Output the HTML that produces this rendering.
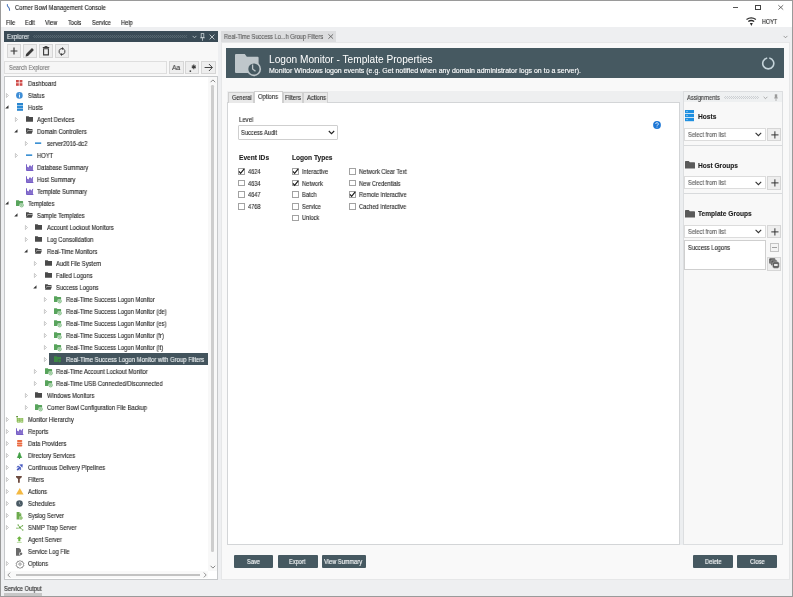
<!DOCTYPE html>
<html><head><meta charset="utf-8">
<style>
*{box-sizing:border-box;margin:0;padding:0}
html,body{width:793px;height:597px;overflow:hidden;background:#fff}
body{position:relative;font-family:"Liberation Sans",sans-serif;color:#222;font-size:6px}
.a{position:absolute}
svg.a{overflow:visible}
.t{position:absolute;white-space:pre;line-height:1;will-change:transform;-webkit-text-stroke:0.12px currentColor}
.btn{position:absolute;background:#eeeeee;border:1px solid #d6d6d6}
.dbtn{position:absolute;background:#465961;border-radius:1px}
.cb{position:absolute;width:7px;height:7px;border:1px solid #a2a2a2;background:#fff}
</style></head><body>
<div class="a" style="left:0;top:26.5px;width:793px;height:571px;background:#eeeff1"></div>
<svg class="a" style="left:6px;top:4px" width="5" height="7.5" viewBox="0 0 5 7.5" ><path d="M1.4 0.1C1 1.5 1.2 2.5 2.5 3.2C3.5 3.8 3.6 4.8 3.6 6.8" stroke="#4470b8" stroke-width="1.05" fill="none"/></svg>
<div class="t" style="left:14.8px;top:5px;font-size:6.6px;color:#1c1c1c;transform:scaleX(0.885);transform-origin:0 0;">Corner Bowl Management Console</div>
<div class="a" style="left:732.8px;top:7px;width:5.4px;height:0.6px;background:#555"></div>
<div class="a" style="left:755px;top:5.2px;width:6px;height:4.6px;border:0.7px solid #444"></div>
<svg class="a" style="left:778.2px;top:5px" width="5.5" height="4.8" viewBox="0 0 5.5 4.8" ><path d="M0.3 0.2l4.9 4.4M5.2 0.2l-4.9 4.4" stroke="#444" stroke-width="0.75"/></svg>
<div class="t" style="left:5.9px;top:20px;font-size:6.6px;color:#1c1c1c;transform:scaleX(0.86);transform-origin:0 0;">File</div>
<div class="t" style="left:24.7px;top:20px;font-size:6.6px;color:#1c1c1c;transform:scaleX(0.86);transform-origin:0 0;">Edit</div>
<div class="t" style="left:45px;top:20px;font-size:6.6px;color:#1c1c1c;transform:scaleX(0.86);transform-origin:0 0;">View</div>
<div class="t" style="left:68.2px;top:20px;font-size:6.6px;color:#1c1c1c;transform:scaleX(0.86);transform-origin:0 0;">Tools</div>
<div class="t" style="left:92px;top:20px;font-size:6.6px;color:#1c1c1c;transform:scaleX(0.86);transform-origin:0 0;">Service</div>
<div class="t" style="left:121px;top:20px;font-size:6.6px;color:#1c1c1c;transform:scaleX(0.86);transform-origin:0 0;">Help</div>
<svg class="a" style="left:746px;top:17px" width="10.4" height="9.5" viewBox="0 0 10.4 9.5" ><path d="M0.5 2.5Q5.2 -0.7 9.9 2.5M2.3 4.5Q5.2 2.5 8.2 4.5" stroke="#2a2a2a" stroke-width="1.3" fill="none"/><path d="M3.9 6.1h2.9l-1.45 2.8z" fill="#2a2a2a"/></svg>
<div class="t" style="left:761.9px;top:19px;font-size:6.6px;color:#1c1c1c;transform:scaleX(0.83);transform-origin:0 0;">HOYT</div>
<div class="a" style="left:4px;top:31px;width:213.5px;height:10.7px;background:#3a4b56"></div>
<div class="t" style="left:7px;top:34px;font-size:6.6px;color:#e4eaed;transform:scaleX(0.9);transform-origin:0 0;">Explorer</div>
<div class="a" style="left:32.8px;top:34.8px;width:154px;height:3.4px;background:repeating-conic-gradient(#56666f 0 25%,#3a4b56 0 50%) 0 0/2px 2px"></div>
<svg class="a" style="left:191.5px;top:35px" width="5" height="4" viewBox="0 0 5 4" ><path d="M0.6 0.9l1.9 1.9 1.9-1.9" stroke="#c8d0d4" stroke-width="0.8" fill="none"/></svg>
<svg class="a" style="left:200px;top:32.6px" width="5" height="8" viewBox="0 0 5 8" ><rect x="1.2" y="0.6" width="2.6" height="4" fill="none" stroke="#c8d0d4" stroke-width="0.8"/><path d="M0.2 4.8h4.6M2.5 4.8v3" stroke="#c8d0d4" stroke-width="0.8"/></svg>
<svg class="a" style="left:208.5px;top:33.5px" width="6" height="6" viewBox="0 0 6 6" ><path d="M0.6 0.6l4.8 4.8M5.4 0.6l-4.8 4.8" stroke="#c8d0d4" stroke-width="0.9"/></svg>
<div class="a" style="left:4px;top:41.7px;width:213.5px;height:35px;background:#f8f8f8"></div>
<div class="btn" style="left:7.1px;top:44.2px;width:13.7px;height:13.5px"></div>
<div class="btn" style="left:23.2px;top:44.2px;width:13.7px;height:13.5px"></div>
<div class="btn" style="left:39.2px;top:44.2px;width:13.7px;height:13.5px"></div>
<div class="btn" style="left:55.2px;top:44.2px;width:13.7px;height:13.5px"></div>
<svg class="a" style="left:10px;top:47px" width="8" height="8" viewBox="0 0 8 8" ><path d="M4 0.6v6.8M0.6 4h6.8" stroke="#3a3a3a" stroke-width="1.2"/></svg>
<svg class="a" style="left:25.3px;top:46.8px" width="10" height="10" viewBox="0 0 10 10" ><path d="M0.6 9.4l0.5-2.4 5.9-5.9 1.9 1.9-5.9 5.9z" fill="#3a3a3a"/></svg>
<svg class="a" style="left:42.3px;top:46.3px" width="8" height="10" viewBox="0 0 8 10" ><path d="M0.8 1.5h6.4M2.6 0.6h2.8" stroke="#3a3a3a" stroke-width="1"/><path d="M1.6 2.7h4.8v6.2h-4.8z" fill="none" stroke="#3a3a3a" stroke-width="1.1"/></svg>
<svg class="a" style="left:58px;top:46.5px" width="8" height="9" viewBox="0 0 8 9" ><path d="M4.4 1.5A3 3 0 0 0 2.3 6.9M3.6 7.5A3 3 0 0 0 5.7 2.1" stroke="#3a3a3a" stroke-width="1" fill="none"/><path d="M4 0.1l2 1.4-2 1.4zM4 6.1l-2 1.4 2 1.4z" fill="#3a3a3a"/></svg>
<div class="a" style="left:4px;top:60.5px;width:162.5px;height:13px;background:#f6f6f6;border:1px solid #dedede"></div>
<div class="t" style="left:8.8px;top:65px;font-size:6.6px;color:#777;transform:scaleX(0.86);transform-origin:0 0;">Search Explorer</div>
<div class="btn" style="left:169.4px;top:60.5px;width:14.2px;height:13px"></div>
<div class="btn" style="left:185.3px;top:60.5px;width:14.2px;height:13px"></div>
<div class="btn" style="left:201.4px;top:60.5px;width:14.2px;height:13px"></div>
<div class="t" style="left:171.5px;top:64px;font-size:7.6px;color:#3a3a3a;transform:scaleX(0.88);transform-origin:0 0;">Aa</div>
<svg class="a" style="left:188.3px;top:63.6px" width="10" height="9" viewBox="0 0 10 9" ><path d="M5.8 0.6v4.6M3.8 1.8l4 2.3M3.8 4.1l4-2.3" stroke="#3a3a3a" stroke-width="1.1"/><rect x="1.6" y="6.4" width="1.5" height="1.5" fill="#3a3a3a"/></svg>
<svg class="a" style="left:203.8px;top:62.8px" width="10" height="9" viewBox="0 0 10 9" ><path d="M0.6 4.5h7.6M4.9 1l3.5 3.5-3.5 3.5" stroke="#444" stroke-width="1" fill="none"/></svg>
<div class="a" style="left:4px;top:75.8px;width:213.5px;height:504.2px;background:#fff;border:1px solid #c6c8ca"></div>
<svg class="a" style="left:16.3px;top:80.3px" width="7" height="6" viewBox="0 0 7 6" ><rect x="0" y="0" width="2.8" height="2.5" fill="#cf4a48"/><rect x="3.6" y="0" width="2.8" height="2.5" fill="#cf4a48"/><rect x="0" y="3.2" width="2.8" height="2.6" fill="#cf4a48"/><rect x="3.6" y="3.2" width="2.8" height="2.6" fill="#cf4a48"/></svg>
<div class="t" style="left:27.7px;top:81px;font-size:6.6px;color:#262626;transform:scaleX(0.88);transform-origin:0 0;">Dashboard</div>
<svg class="a" style="left:5.7px;top:92.8px" width="3" height="5" viewBox="0 0 3 5" ><path d="M0.4 0.5l2.1 2-2.1 2z" stroke="#a6a6a6" stroke-width="0.6" fill="none"/></svg>
<svg class="a" style="left:16.3px;top:92.3px" width="7" height="7" viewBox="0 0 7 7" ><circle cx="3.4" cy="3.4" r="3.3" fill="#3f8ed6"/><rect x="3" y="3" width="0.9" height="2.5" fill="#fff"/><rect x="3" y="1.5" width="0.9" height="0.9" fill="#fff"/></svg>
<div class="t" style="left:27.7px;top:93px;font-size:6.6px;color:#262626;transform:scaleX(0.88);transform-origin:0 0;">Status</div>
<svg class="a" style="left:4.6px;top:105.3px" width="4" height="4" viewBox="0 0 4 4" ><path d="M3.5 0.3v3.3h-3.3z" fill="#333"/></svg>
<svg class="a" style="left:17.0px;top:103.1px" width="6" height="8" viewBox="0 0 6 8" ><rect x="0" y="0" width="6" height="2.3" fill="#2a86cf"/><rect x="0" y="2.75" width="6" height="2.3" fill="#2a8ad6"/><rect x="0" y="5.5" width="6" height="2.3" fill="#2a86cf"/></svg>
<div class="t" style="left:27.7px;top:105px;font-size:6.6px;color:#262626;transform:scaleX(0.88);transform-origin:0 0;">Hosts</div>
<svg class="a" style="left:15.2px;top:116.8px" width="3" height="5" viewBox="0 0 3 5" ><path d="M0.4 0.5l2.1 2-2.1 2z" stroke="#a6a6a6" stroke-width="0.6" fill="none"/></svg>
<svg class="a" style="left:25.8px;top:116.3px" width="7" height="6" viewBox="0 0 7 6" ><path d="M0 0.3h2.6l0.8 0.8h3.6v4.7h-7z" fill="#4a4a4a"/></svg>
<div class="t" style="left:37.2px;top:117px;font-size:6.6px;color:#262626;transform:scaleX(0.88);transform-origin:0 0;">Agent Devices</div>
<svg class="a" style="left:14.1px;top:129.3px" width="4" height="4" viewBox="0 0 4 4" ><path d="M3.5 0.3v3.3h-3.3z" fill="#333"/></svg>
<svg class="a" style="left:25.8px;top:128.3px" width="7" height="6" viewBox="0 0 7 6" ><path d="M0 0.3h2.6l0.8 0.8h3.1v1h-4.6l-1.9 3.7z" fill="#4a4a4a"/><path d="M1.9 2.5h5.1l-1.3 3.3h-5.7z" fill="#4a4a4a"/></svg>
<div class="t" style="left:37.2px;top:129px;font-size:6.6px;color:#262626;transform:scaleX(0.88);transform-origin:0 0;">Domain Controllers</div>
<svg class="a" style="left:24.7px;top:140.8px" width="3" height="5" viewBox="0 0 3 5" ><path d="M0.4 0.5l2.1 2-2.1 2z" stroke="#a6a6a6" stroke-width="0.6" fill="none"/></svg>
<svg class="a" style="left:35.3px;top:142.1px" width="7" height="3" viewBox="0 0 7 3" ><rect x="0" y="0.4" width="6.2" height="1.5" fill="#2a86cf"/></svg>
<div class="t" style="left:46.7px;top:141px;font-size:6.6px;color:#262626;transform:scaleX(0.88);transform-origin:0 0;">server2016-dc2</div>
<svg class="a" style="left:15.2px;top:152.8px" width="3" height="5" viewBox="0 0 3 5" ><path d="M0.4 0.5l2.1 2-2.1 2z" stroke="#a6a6a6" stroke-width="0.6" fill="none"/></svg>
<svg class="a" style="left:25.8px;top:154.1px" width="7" height="3" viewBox="0 0 7 3" ><rect x="0" y="0.4" width="6.2" height="1.5" fill="#2a86cf"/></svg>
<div class="t" style="left:37.2px;top:153px;font-size:6.6px;color:#262626;transform:scaleX(0.88);transform-origin:0 0;">HOYT</div>
<svg class="a" style="left:25.8px;top:164.3px" width="8" height="7" viewBox="0 0 8 7" ><path d="M0.9 6.2L0.9 2.8L2.4 4.2L4 1.6L5.4 3.4L7 0.9V6.2z" fill="#6a4fc1" opacity="0.8"/><path d="M0.5 0.3v6.2h6.9" stroke="#6a4fc1" stroke-width="0.9" fill="none"/><path d="M0.9 2.8l1.5 1.4 1.6-2.6 1.4 1.8 1.6-2.5" stroke="#6a4fc1" stroke-width="0.8" fill="none"/></svg>
<div class="t" style="left:37.2px;top:165px;font-size:6.6px;color:#262626;transform:scaleX(0.88);transform-origin:0 0;">Database Summary</div>
<svg class="a" style="left:25.8px;top:176.3px" width="8" height="7" viewBox="0 0 8 7" ><path d="M0.9 6.2L0.9 2.8L2.4 4.2L4 1.6L5.4 3.4L7 0.9V6.2z" fill="#6a4fc1" opacity="0.8"/><path d="M0.5 0.3v6.2h6.9" stroke="#6a4fc1" stroke-width="0.9" fill="none"/><path d="M0.9 2.8l1.5 1.4 1.6-2.6 1.4 1.8 1.6-2.5" stroke="#6a4fc1" stroke-width="0.8" fill="none"/></svg>
<div class="t" style="left:37.2px;top:177px;font-size:6.6px;color:#262626;transform:scaleX(0.88);transform-origin:0 0;">Host Summary</div>
<svg class="a" style="left:25.8px;top:188.3px" width="8" height="7" viewBox="0 0 8 7" ><path d="M0.9 6.2L0.9 2.8L2.4 4.2L4 1.6L5.4 3.4L7 0.9V6.2z" fill="#6a4fc1" opacity="0.8"/><path d="M0.5 0.3v6.2h6.9" stroke="#6a4fc1" stroke-width="0.9" fill="none"/><path d="M0.9 2.8l1.5 1.4 1.6-2.6 1.4 1.8 1.6-2.5" stroke="#6a4fc1" stroke-width="0.8" fill="none"/></svg>
<div class="t" style="left:37.2px;top:189px;font-size:6.6px;color:#262626;transform:scaleX(0.88);transform-origin:0 0;">Template Summary</div>
<svg class="a" style="left:4.6px;top:201.3px" width="4" height="4" viewBox="0 0 4 4" ><path d="M3.5 0.3v3.3h-3.3z" fill="#333"/></svg>
<svg class="a" style="left:16.3px;top:200.3px" width="8" height="8" viewBox="0 0 8 8" ><path d="M0 0.6a0.4 0.4 0 0 1 0.4-0.4h2.3l0.8 0.8h3.2a0.4 0.4 0 0 1 0.4 0.4v4.6h-7.1z" fill="#58a45c"/><circle cx="5.6" cy="5.2" r="2.3" fill="#fff"/><circle cx="5.6" cy="5.2" r="1.8" fill="#cfe8d0" stroke="#58a45c" stroke-width="0.6"/><path d="M5.4 4.2v1.2h1" stroke="#58a45c" stroke-width="0.55" fill="none"/></svg>
<div class="t" style="left:27.7px;top:201px;font-size:6.6px;color:#262626;transform:scaleX(0.88);transform-origin:0 0;">Templates</div>
<svg class="a" style="left:14.1px;top:213.3px" width="4" height="4" viewBox="0 0 4 4" ><path d="M3.5 0.3v3.3h-3.3z" fill="#333"/></svg>
<svg class="a" style="left:25.8px;top:212.3px" width="7" height="6" viewBox="0 0 7 6" ><path d="M0 0.3h2.6l0.8 0.8h3.1v1h-4.6l-1.9 3.7z" fill="#4a4a4a"/><path d="M1.9 2.5h5.1l-1.3 3.3h-5.7z" fill="#4a4a4a"/></svg>
<div class="t" style="left:37.2px;top:213px;font-size:6.6px;color:#262626;transform:scaleX(0.88);transform-origin:0 0;">Sample Templates</div>
<svg class="a" style="left:24.7px;top:224.8px" width="3" height="5" viewBox="0 0 3 5" ><path d="M0.4 0.5l2.1 2-2.1 2z" stroke="#a6a6a6" stroke-width="0.6" fill="none"/></svg>
<svg class="a" style="left:35.3px;top:224.3px" width="7" height="6" viewBox="0 0 7 6" ><path d="M0 0.3h2.6l0.8 0.8h3.6v4.7h-7z" fill="#4a4a4a"/></svg>
<div class="t" style="left:46.7px;top:225px;font-size:6.6px;color:#262626;transform:scaleX(0.88);transform-origin:0 0;">Account Lockout Monitors</div>
<svg class="a" style="left:24.7px;top:236.8px" width="3" height="5" viewBox="0 0 3 5" ><path d="M0.4 0.5l2.1 2-2.1 2z" stroke="#a6a6a6" stroke-width="0.6" fill="none"/></svg>
<svg class="a" style="left:35.3px;top:236.3px" width="7" height="6" viewBox="0 0 7 6" ><path d="M0 0.3h2.6l0.8 0.8h3.6v4.7h-7z" fill="#4a4a4a"/></svg>
<div class="t" style="left:46.7px;top:237px;font-size:6.6px;color:#262626;transform:scaleX(0.88);transform-origin:0 0;">Log Consolidation</div>
<svg class="a" style="left:23.6px;top:249.3px" width="4" height="4" viewBox="0 0 4 4" ><path d="M3.5 0.3v3.3h-3.3z" fill="#333"/></svg>
<svg class="a" style="left:35.3px;top:248.3px" width="7" height="6" viewBox="0 0 7 6" ><path d="M0 0.3h2.6l0.8 0.8h3.1v1h-4.6l-1.9 3.7z" fill="#4a4a4a"/><path d="M1.9 2.5h5.1l-1.3 3.3h-5.7z" fill="#4a4a4a"/></svg>
<div class="t" style="left:46.7px;top:249px;font-size:6.6px;color:#262626;transform:scaleX(0.88);transform-origin:0 0;">Real-Time Monitors</div>
<svg class="a" style="left:34.2px;top:260.8px" width="3" height="5" viewBox="0 0 3 5" ><path d="M0.4 0.5l2.1 2-2.1 2z" stroke="#a6a6a6" stroke-width="0.6" fill="none"/></svg>
<svg class="a" style="left:44.8px;top:260.3px" width="7" height="6" viewBox="0 0 7 6" ><path d="M0 0.3h2.6l0.8 0.8h3.6v4.7h-7z" fill="#4a4a4a"/></svg>
<div class="t" style="left:56.2px;top:261px;font-size:6.6px;color:#262626;transform:scaleX(0.88);transform-origin:0 0;">Audit File System</div>
<svg class="a" style="left:34.2px;top:272.8px" width="3" height="5" viewBox="0 0 3 5" ><path d="M0.4 0.5l2.1 2-2.1 2z" stroke="#a6a6a6" stroke-width="0.6" fill="none"/></svg>
<svg class="a" style="left:44.8px;top:272.3px" width="7" height="6" viewBox="0 0 7 6" ><path d="M0 0.3h2.6l0.8 0.8h3.6v4.7h-7z" fill="#4a4a4a"/></svg>
<div class="t" style="left:56.2px;top:273px;font-size:6.6px;color:#262626;transform:scaleX(0.88);transform-origin:0 0;">Failed Logons</div>
<svg class="a" style="left:33.1px;top:285.3px" width="4" height="4" viewBox="0 0 4 4" ><path d="M3.5 0.3v3.3h-3.3z" fill="#333"/></svg>
<svg class="a" style="left:44.8px;top:284.3px" width="7" height="6" viewBox="0 0 7 6" ><path d="M0 0.3h2.6l0.8 0.8h3.1v1h-4.6l-1.9 3.7z" fill="#4a4a4a"/><path d="M1.9 2.5h5.1l-1.3 3.3h-5.7z" fill="#4a4a4a"/></svg>
<div class="t" style="left:56.2px;top:285px;font-size:6.6px;color:#262626;transform:scaleX(0.88);transform-origin:0 0;">Success Logons</div>
<svg class="a" style="left:43.7px;top:296.8px" width="3" height="5" viewBox="0 0 3 5" ><path d="M0.4 0.5l2.1 2-2.1 2z" stroke="#a6a6a6" stroke-width="0.6" fill="none"/></svg>
<svg class="a" style="left:54.3px;top:296.3px" width="8" height="8" viewBox="0 0 8 8" ><path d="M0 0.6a0.4 0.4 0 0 1 0.4-0.4h2.3l0.8 0.8h3.2a0.4 0.4 0 0 1 0.4 0.4v4.6h-7.1z" fill="#58a45c"/><circle cx="5.6" cy="5.2" r="2.3" fill="#fff"/><circle cx="5.6" cy="5.2" r="1.8" fill="#cfe8d0" stroke="#58a45c" stroke-width="0.6"/><path d="M5.4 4.2v1.2h1" stroke="#58a45c" stroke-width="0.55" fill="none"/></svg>
<div class="t" style="left:65.7px;top:297px;font-size:6.6px;color:#262626;transform:scaleX(0.88);transform-origin:0 0;">Real-Time Success Logon Monitor</div>
<svg class="a" style="left:43.7px;top:308.8px" width="3" height="5" viewBox="0 0 3 5" ><path d="M0.4 0.5l2.1 2-2.1 2z" stroke="#a6a6a6" stroke-width="0.6" fill="none"/></svg>
<svg class="a" style="left:54.3px;top:308.3px" width="8" height="8" viewBox="0 0 8 8" ><path d="M0 0.6a0.4 0.4 0 0 1 0.4-0.4h2.3l0.8 0.8h3.2a0.4 0.4 0 0 1 0.4 0.4v4.6h-7.1z" fill="#58a45c"/><circle cx="5.6" cy="5.2" r="2.3" fill="#fff"/><circle cx="5.6" cy="5.2" r="1.8" fill="#cfe8d0" stroke="#58a45c" stroke-width="0.6"/><path d="M5.4 4.2v1.2h1" stroke="#58a45c" stroke-width="0.55" fill="none"/></svg>
<div class="t" style="left:65.7px;top:309px;font-size:6.6px;color:#262626;transform:scaleX(0.88);transform-origin:0 0;">Real-Time Success Logon Monitor (de)</div>
<svg class="a" style="left:43.7px;top:320.8px" width="3" height="5" viewBox="0 0 3 5" ><path d="M0.4 0.5l2.1 2-2.1 2z" stroke="#a6a6a6" stroke-width="0.6" fill="none"/></svg>
<svg class="a" style="left:54.3px;top:320.3px" width="8" height="8" viewBox="0 0 8 8" ><path d="M0 0.6a0.4 0.4 0 0 1 0.4-0.4h2.3l0.8 0.8h3.2a0.4 0.4 0 0 1 0.4 0.4v4.6h-7.1z" fill="#58a45c"/><circle cx="5.6" cy="5.2" r="2.3" fill="#fff"/><circle cx="5.6" cy="5.2" r="1.8" fill="#cfe8d0" stroke="#58a45c" stroke-width="0.6"/><path d="M5.4 4.2v1.2h1" stroke="#58a45c" stroke-width="0.55" fill="none"/></svg>
<div class="t" style="left:65.7px;top:321px;font-size:6.6px;color:#262626;transform:scaleX(0.88);transform-origin:0 0;">Real-Time Success Logon Monitor (es)</div>
<svg class="a" style="left:43.7px;top:332.8px" width="3" height="5" viewBox="0 0 3 5" ><path d="M0.4 0.5l2.1 2-2.1 2z" stroke="#a6a6a6" stroke-width="0.6" fill="none"/></svg>
<svg class="a" style="left:54.3px;top:332.3px" width="8" height="8" viewBox="0 0 8 8" ><path d="M0 0.6a0.4 0.4 0 0 1 0.4-0.4h2.3l0.8 0.8h3.2a0.4 0.4 0 0 1 0.4 0.4v4.6h-7.1z" fill="#58a45c"/><circle cx="5.6" cy="5.2" r="2.3" fill="#fff"/><circle cx="5.6" cy="5.2" r="1.8" fill="#cfe8d0" stroke="#58a45c" stroke-width="0.6"/><path d="M5.4 4.2v1.2h1" stroke="#58a45c" stroke-width="0.55" fill="none"/></svg>
<div class="t" style="left:65.7px;top:333px;font-size:6.6px;color:#262626;transform:scaleX(0.88);transform-origin:0 0;">Real-Time Success Logon Monitor (fr)</div>
<svg class="a" style="left:43.7px;top:344.8px" width="3" height="5" viewBox="0 0 3 5" ><path d="M0.4 0.5l2.1 2-2.1 2z" stroke="#a6a6a6" stroke-width="0.6" fill="none"/></svg>
<svg class="a" style="left:54.3px;top:344.3px" width="8" height="8" viewBox="0 0 8 8" ><path d="M0 0.6a0.4 0.4 0 0 1 0.4-0.4h2.3l0.8 0.8h3.2a0.4 0.4 0 0 1 0.4 0.4v4.6h-7.1z" fill="#58a45c"/><circle cx="5.6" cy="5.2" r="2.3" fill="#fff"/><circle cx="5.6" cy="5.2" r="1.8" fill="#cfe8d0" stroke="#58a45c" stroke-width="0.6"/><path d="M5.4 4.2v1.2h1" stroke="#58a45c" stroke-width="0.55" fill="none"/></svg>
<div class="t" style="left:65.7px;top:345px;font-size:6.6px;color:#262626;transform:scaleX(0.88);transform-origin:0 0;">Real-Time Success Logon Monitor (it)</div>
<div class="a" style="left:49.2px;top:353px;width:158.5px;height:11.5px;background:#43545d"></div>
<svg class="a" style="left:43.7px;top:356.8px" width="3" height="5" viewBox="0 0 3 5" ><path d="M0.4 0.5l2.1 2-2.1 2z" stroke="#a6a6a6" stroke-width="0.6" fill="none"/></svg>
<svg class="a" style="left:54.3px;top:356.3px" width="8" height="7" viewBox="0 0 8 7" ><path d="M0 0.3h2.6l0.8 0.8h3.6v4.9h-7z" fill="#3d8a44"/><circle cx="5.6" cy="5" r="1.9" fill="#43545d"/><circle cx="5.6" cy="5" r="1.4" fill="#3d8a44"/></svg>
<div class="t" style="left:65.7px;top:357px;font-size:6.6px;color:#f0f4f5;transform:scaleX(0.895);transform-origin:0 0;">Real-Time Success Logon Monitor with Group Filters</div>
<svg class="a" style="left:34.2px;top:368.8px" width="3" height="5" viewBox="0 0 3 5" ><path d="M0.4 0.5l2.1 2-2.1 2z" stroke="#a6a6a6" stroke-width="0.6" fill="none"/></svg>
<svg class="a" style="left:44.8px;top:368.3px" width="8" height="8" viewBox="0 0 8 8" ><path d="M0 0.6a0.4 0.4 0 0 1 0.4-0.4h2.3l0.8 0.8h3.2a0.4 0.4 0 0 1 0.4 0.4v4.6h-7.1z" fill="#58a45c"/><circle cx="5.6" cy="5.2" r="2.3" fill="#fff"/><circle cx="5.6" cy="5.2" r="1.8" fill="#cfe8d0" stroke="#58a45c" stroke-width="0.6"/><path d="M5.4 4.2v1.2h1" stroke="#58a45c" stroke-width="0.55" fill="none"/></svg>
<div class="t" style="left:56.2px;top:369px;font-size:6.6px;color:#262626;transform:scaleX(0.88);transform-origin:0 0;">Real-Time Account Lockout Monitor</div>
<svg class="a" style="left:34.2px;top:380.8px" width="3" height="5" viewBox="0 0 3 5" ><path d="M0.4 0.5l2.1 2-2.1 2z" stroke="#a6a6a6" stroke-width="0.6" fill="none"/></svg>
<svg class="a" style="left:44.8px;top:380.3px" width="8" height="8" viewBox="0 0 8 8" ><path d="M0 0.6a0.4 0.4 0 0 1 0.4-0.4h2.3l0.8 0.8h3.2a0.4 0.4 0 0 1 0.4 0.4v4.6h-7.1z" fill="#58a45c"/><circle cx="5.6" cy="5.2" r="2.3" fill="#fff"/><circle cx="5.6" cy="5.2" r="1.8" fill="#cfe8d0" stroke="#58a45c" stroke-width="0.6"/><path d="M5.4 4.2v1.2h1" stroke="#58a45c" stroke-width="0.55" fill="none"/></svg>
<div class="t" style="left:56.2px;top:381px;font-size:6.6px;color:#262626;transform:scaleX(0.88);transform-origin:0 0;">Real-Time USB Connected/Disconnected</div>
<svg class="a" style="left:24.7px;top:392.8px" width="3" height="5" viewBox="0 0 3 5" ><path d="M0.4 0.5l2.1 2-2.1 2z" stroke="#a6a6a6" stroke-width="0.6" fill="none"/></svg>
<svg class="a" style="left:35.3px;top:392.3px" width="7" height="6" viewBox="0 0 7 6" ><path d="M0 0.3h2.6l0.8 0.8h3.6v4.7h-7z" fill="#4a4a4a"/></svg>
<div class="t" style="left:46.7px;top:393px;font-size:6.6px;color:#262626;transform:scaleX(0.88);transform-origin:0 0;">Windows Monitors</div>
<svg class="a" style="left:24.7px;top:404.8px" width="3" height="5" viewBox="0 0 3 5" ><path d="M0.4 0.5l2.1 2-2.1 2z" stroke="#a6a6a6" stroke-width="0.6" fill="none"/></svg>
<svg class="a" style="left:35.3px;top:404.3px" width="8" height="8" viewBox="0 0 8 8" ><path d="M0 0.6a0.4 0.4 0 0 1 0.4-0.4h2.3l0.8 0.8h3.2a0.4 0.4 0 0 1 0.4 0.4v4.6h-7.1z" fill="#58a45c"/><circle cx="5.6" cy="5.2" r="2.3" fill="#fff"/><circle cx="5.6" cy="5.2" r="1.8" fill="#cfe8d0" stroke="#58a45c" stroke-width="0.6"/><path d="M5.4 4.2v1.2h1" stroke="#58a45c" stroke-width="0.55" fill="none"/></svg>
<div class="t" style="left:46.7px;top:405px;font-size:6.6px;color:#262626;transform:scaleX(0.88);transform-origin:0 0;">Corner Bowl Configuration File Backup</div>
<svg class="a" style="left:5.7px;top:416.8px" width="3" height="5" viewBox="0 0 3 5" ><path d="M0.4 0.5l2.1 2-2.1 2z" stroke="#a6a6a6" stroke-width="0.6" fill="none"/></svg>
<svg class="a" style="left:16.3px;top:416.3px" width="8" height="7" viewBox="0 0 8 7" ><rect x="0.2" y="0" width="1.8" height="1.2" fill="#5f8f3a"/><path d="M1.1 1.2v4.8" stroke="#7cb342" stroke-width="0.6"/><rect x="1.6" y="2.3" width="2.2" height="1.6" fill="#c5e1a5" stroke="#7cb342" stroke-width="0.6"/><rect x="4.7" y="2.3" width="2.2" height="1.6" fill="#c5e1a5" stroke="#7cb342" stroke-width="0.6"/><rect x="1.6" y="4.6" width="2.2" height="1.6" fill="#c5e1a5" stroke="#7cb342" stroke-width="0.6"/><rect x="4.7" y="4.6" width="2.2" height="1.6" fill="#c5e1a5" stroke="#7cb342" stroke-width="0.6"/></svg>
<div class="t" style="left:27.7px;top:417px;font-size:6.6px;color:#262626;transform:scaleX(0.88);transform-origin:0 0;">Monitor Hierarchy</div>
<svg class="a" style="left:5.7px;top:428.8px" width="3" height="5" viewBox="0 0 3 5" ><path d="M0.4 0.5l2.1 2-2.1 2z" stroke="#a6a6a6" stroke-width="0.6" fill="none"/></svg>
<svg class="a" style="left:16.3px;top:428.3px" width="8" height="7" viewBox="0 0 8 7" ><path d="M0.9 6.2L0.9 2.8L2.4 4.2L4 1.6L5.4 3.4L7 0.9V6.2z" fill="#6a4fc1" opacity="0.8"/><path d="M0.5 0.3v6.2h6.9" stroke="#6a4fc1" stroke-width="0.9" fill="none"/><path d="M0.9 2.8l1.5 1.4 1.6-2.6 1.4 1.8 1.6-2.5" stroke="#6a4fc1" stroke-width="0.8" fill="none"/></svg>
<div class="t" style="left:27.7px;top:429px;font-size:6.6px;color:#262626;transform:scaleX(0.88);transform-origin:0 0;">Reports</div>
<svg class="a" style="left:5.7px;top:440.8px" width="3" height="5" viewBox="0 0 3 5" ><path d="M0.4 0.5l2.1 2-2.1 2z" stroke="#a6a6a6" stroke-width="0.6" fill="none"/></svg>
<svg class="a" style="left:16.3px;top:440.3px" width="7" height="7" viewBox="0 0 7 7" ><rect x="1" y="0.1" width="5.3" height="1.9" rx="0.95" fill="#ea6a40"/><rect x="1" y="2.4" width="5.3" height="1.8" rx="0.5" fill="#ea6a40"/><rect x="1" y="4.6" width="5.3" height="1.9" rx="0.95" fill="#ea6a40"/></svg>
<div class="t" style="left:27.7px;top:441px;font-size:6.6px;color:#262626;transform:scaleX(0.88);transform-origin:0 0;">Data Providers</div>
<svg class="a" style="left:5.7px;top:452.8px" width="3" height="5" viewBox="0 0 3 5" ><path d="M0.4 0.5l2.1 2-2.1 2z" stroke="#a6a6a6" stroke-width="0.6" fill="none"/></svg>
<svg class="a" style="left:16.3px;top:452.3px" width="7" height="7" viewBox="0 0 7 7" ><path d="M3.5 0l1.6 2.4h-0.8l1.6 2.3h-0.9l1.4 1.4h-5.8l1.4-1.4h-0.9l1.6-2.3h-0.8z" fill="#43a047"/><rect x="3" y="6" width="1" height="1" fill="#43a047"/></svg>
<div class="t" style="left:27.7px;top:453px;font-size:6.6px;color:#262626;transform:scaleX(0.88);transform-origin:0 0;">Directory Services</div>
<svg class="a" style="left:5.7px;top:464.8px" width="3" height="5" viewBox="0 0 3 5" ><path d="M0.4 0.5l2.1 2-2.1 2z" stroke="#a6a6a6" stroke-width="0.6" fill="none"/></svg>
<svg class="a" style="left:16.3px;top:464.3px" width="7" height="7" viewBox="0 0 7 7" ><path d="M1.2 6.2l3.2-3.4" stroke="#4658c0" stroke-width="1.7"/><path d="M6.8 0.2l-0.4 3.6-3.2-3.2z" fill="#4658c0"/><path d="M0.3 3.5l1.8-1.9 1.4 1.4z" fill="#4658c0"/><path d="M3.5 6.8l1.9-1.8-1.4-1.4z" fill="#4658c0"/></svg>
<div class="t" style="left:27.7px;top:465px;font-size:6.6px;color:#262626;transform:scaleX(0.88);transform-origin:0 0;">Continuous Delivery Pipelines</div>
<svg class="a" style="left:5.7px;top:476.8px" width="3" height="5" viewBox="0 0 3 5" ><path d="M0.4 0.5l2.1 2-2.1 2z" stroke="#a6a6a6" stroke-width="0.6" fill="none"/></svg>
<svg class="a" style="left:16.3px;top:476.3px" width="6" height="7" viewBox="0 0 6 7" ><path d="M0 0h5.8v1.3l-2 1.8v3.6h-1.8v-3.6l-2-1.8z" fill="#6d4c41"/></svg>
<div class="t" style="left:27.7px;top:477px;font-size:6.6px;color:#262626;transform:scaleX(0.88);transform-origin:0 0;">Filters</div>
<svg class="a" style="left:5.7px;top:488.8px" width="3" height="5" viewBox="0 0 3 5" ><path d="M0.4 0.5l2.1 2-2.1 2z" stroke="#a6a6a6" stroke-width="0.6" fill="none"/></svg>
<svg class="a" style="left:16.3px;top:488.3px" width="8" height="7" viewBox="0 0 8 7" ><path d="M3.8 0l3.8 6.6h-7.6z" fill="#f4b942"/></svg>
<div class="t" style="left:27.7px;top:489px;font-size:6.6px;color:#262626;transform:scaleX(0.88);transform-origin:0 0;">Actions</div>
<svg class="a" style="left:5.7px;top:500.8px" width="3" height="5" viewBox="0 0 3 5" ><path d="M0.4 0.5l2.1 2-2.1 2z" stroke="#a6a6a6" stroke-width="0.6" fill="none"/></svg>
<svg class="a" style="left:16.3px;top:500.3px" width="7" height="7" viewBox="0 0 7 7" ><circle cx="3.5" cy="3.5" r="3.3" fill="#4a5a64"/><path d="M3.4 1.8v1.8l1.1 0.9" stroke="#d0d8dc" stroke-width="0.6" fill="none"/></svg>
<div class="t" style="left:27.7px;top:501px;font-size:6.6px;color:#262626;transform:scaleX(0.88);transform-origin:0 0;">Schedules</div>
<svg class="a" style="left:5.7px;top:512.8px" width="3" height="5" viewBox="0 0 3 5" ><path d="M0.4 0.5l2.1 2-2.1 2z" stroke="#a6a6a6" stroke-width="0.6" fill="none"/></svg>
<svg class="a" style="left:16.3px;top:512.3px" width="7" height="8" viewBox="0 0 7 8" ><path d="M0.6 0h2.9l1.8 1.8v5.6h-4.7z" fill="#6dab4d"/><path d="M3.5 0v1.8h1.8" stroke="#d9ecd0" stroke-width="0.4" fill="none"/><circle cx="5" cy="6" r="1.9" fill="#fff"/><circle cx="5" cy="6" r="1.4" fill="#a9d18e" stroke="#6dab4d" stroke-width="0.5"/></svg>
<div class="t" style="left:27.7px;top:513px;font-size:6.6px;color:#262626;transform:scaleX(0.88);transform-origin:0 0;">Syslog Server</div>
<svg class="a" style="left:5.7px;top:524.8px" width="3" height="5" viewBox="0 0 3 5" ><path d="M0.4 0.5l2.1 2-2.1 2z" stroke="#a6a6a6" stroke-width="0.6" fill="none"/></svg>
<svg class="a" style="left:16.3px;top:524.3px" width="8" height="7" viewBox="0 0 8 7" ><path d="M0 4.2h2.8M2.2 1l1.8 2.6M4 3.6l2.2-1.8M4 3.6l2.6 2.3" stroke="#6dab4d" stroke-width="0.8" fill="none"/><circle cx="4" cy="3.6" r="1.1" fill="#6dab4d"/><circle cx="2.1" cy="0.9" r="0.7" fill="#6dab4d"/><circle cx="6.5" cy="1.7" r="0.7" fill="#6dab4d"/><circle cx="6.8" cy="6" r="0.7" fill="#6dab4d"/></svg>
<div class="t" style="left:27.7px;top:525px;font-size:6.6px;color:#262626;transform:scaleX(0.88);transform-origin:0 0;">SNMP Trap Server</div>
<svg class="a" style="left:16.3px;top:536.3px" width="7" height="7" viewBox="0 0 7 7" ><path d="M3.3 0.2l2.5 2.6h-1.5v2.4h-2v-2.4h-1.5z" fill="#6cb33f"/><rect x="0.9" y="5.9" width="4.8" height="0.9" fill="#b5d99c"/></svg>
<div class="t" style="left:27.7px;top:537px;font-size:6.6px;color:#262626;transform:scaleX(0.88);transform-origin:0 0;">Agent Server</div>
<svg class="a" style="left:16.3px;top:548.3px" width="7" height="8" viewBox="0 0 7 8" ><path d="M0 0h3.2l1.8 1.8v5.9h-5z" fill="#6a6a6a"/><circle cx="5" cy="5.8" r="1.9" fill="#fff"/><circle cx="5" cy="5.8" r="1.3" fill="#6a6a6a"/></svg>
<div class="t" style="left:27.7px;top:549px;font-size:6.6px;color:#262626;transform:scaleX(0.88);transform-origin:0 0;">Service Log File</div>
<svg class="a" style="left:5.7px;top:560.8px" width="3" height="5" viewBox="0 0 3 5" ><path d="M0.4 0.5l2.1 2-2.1 2z" stroke="#a6a6a6" stroke-width="0.6" fill="none"/></svg>
<svg class="a" style="left:16.3px;top:560.3px" width="8" height="8" viewBox="0 0 8 8" ><path d="M4 0.4l0.9 1.1 1.4-0.3 0.4 1.4 1.3 0.6-0.6 1.3 0.6 1.3-1.3 0.6-0.4 1.4-1.4-0.3-0.9 1.1-0.9-1.1-1.4 0.3-0.4-1.4-1.3-0.6 0.6-1.3-0.6-1.3 1.3-0.6 0.4-1.4 1.4 0.3z" fill="none" stroke="#707070" stroke-width="0.75"/><circle cx="4" cy="4.1" r="1.2" fill="none" stroke="#707070" stroke-width="0.7"/></svg>
<div class="t" style="left:27.7px;top:561px;font-size:6.6px;color:#262626;transform:scaleX(0.88);transform-origin:0 0;">Options</div>
<div class="a" style="left:208px;top:76.8px;width:8.5px;height:494px;background:#f8f8f8"></div>
<div class="a" style="left:5px;top:571px;width:203px;height:7.2px;background:#f9f9f9"></div>
<svg class="a" style="left:209.7px;top:79px" width="6" height="4" viewBox="0 0 6 4" ><path d="M0.6 3.2l2.3-2.3 2.3 2.3" stroke="#7a7a7a" stroke-width="0.9" fill="none"/></svg>
<div class="a" style="left:211.4px;top:85.4px;width:2.6px;height:467px;background:#cdcdcd;border-radius:1.3px"></div>
<svg class="a" style="left:209.7px;top:564.5px" width="6" height="4" viewBox="0 0 6 4" ><path d="M0.6 0.8l2.3 2.3 2.3-2.3" stroke="#7a7a7a" stroke-width="0.9" fill="none"/></svg>
<svg class="a" style="left:7.2px;top:572.1px" width="4" height="6" viewBox="0 0 4 6" ><path d="M3.2 0.6l-2.4 2.4 2.4 2.4" stroke="#7a7a7a" stroke-width="0.8" fill="none"/></svg>
<div class="a" style="left:16.3px;top:574.2px;width:183.5px;height:2.3px;background:#c2c2c2"></div>
<svg class="a" style="left:203px;top:572.1px" width="4" height="6" viewBox="0 0 4 6" ><path d="M0.8 0.6l2.4 2.4-2.4 2.4" stroke="#7a7a7a" stroke-width="0.8" fill="none"/></svg>
<div class="t" style="left:3.8px;top:586px;font-size:6.6px;color:#262626;transform:scaleX(0.865);transform-origin:0 0;">Service Output</div>
<div class="a" style="left:3.6px;top:593.2px;width:38.6px;height:2.8px;background:#c6c6c6"></div>
<div class="a" style="left:221.2px;top:31px;width:114.7px;height:11.4px;background:#dcdddf"></div>
<div class="t" style="left:224.1px;top:34px;font-size:6.6px;color:#5a5a5a;transform:scaleX(0.86);transform-origin:0 0;">Real-Time Success Lo...h Group Filters</div>
<svg class="a" style="left:328px;top:34.3px" width="5.5" height="5" viewBox="0 0 5.5 5" ><path d="M0.4 0.3l4.7 4.4M5.1 0.3l-4.7 4.4" stroke="#555" stroke-width="0.8"/></svg>
<svg class="a" style="left:782.5px;top:34.5px" width="5" height="4" viewBox="0 0 5 4" ><path d="M0.6 0.9l1.9 1.9 1.9-1.9" stroke="#777" stroke-width="0.7" fill="none"/></svg>
<div class="a" style="left:221px;top:42.4px;width:568.5px;height:537.8px;background:#f9f9f9;border:1px solid #e6e7e8"></div>
<div class="a" style="left:226px;top:47.8px;width:558.3px;height:30.2px;background:#465961"></div>
<svg class="a" style="left:235px;top:53.9px" width="27" height="24" viewBox="0 0 27 24" ><path d="M0 1a1 1 0 0 1 1-1h8.8l2 2.7h10.8a1 1 0 0 1 1 1v14.3a1 1 0 0 1-1 1h-21.6a1 1 0 0 1-1-1z" fill="#bfc7cb"/><circle cx="18.9" cy="15" r="7.2" fill="#bfc7cb"/><circle cx="18.9" cy="15" r="5.6" fill="#465961"/><path d="M17.6 10.6v4.3l2.9 2.4" stroke="#bfc7cb" stroke-width="1.3" fill="none"/></svg>
<div class="t" style="left:269.4px;top:55px;font-size:10.15px;color:#ffffff;-webkit-text-stroke:0;">Logon Monitor - Template Properties</div>
<div class="t" style="left:269.4px;top:67px;font-size:7.0px;color:#ffffff;">Monitor Windows logon events (e.g. Get notified when any domain administrator logs on to a server).</div>
<svg class="a" style="left:762px;top:56.9px" width="13" height="13" viewBox="0 0 13 13" ><path d="M7.3 1a5.5 5.5 0 1 1-2.1 0" stroke="#c5d4da" stroke-width="1.6" fill="none"/></svg>
<div class="a" style="left:679.5px;top:91px;width:4px;height:453.5px;background:#eceef0"></div>
<div class="a" style="left:227px;top:91px;width:453px;height:11.5px;background:#eeeff0"></div>
<div class="a" style="left:227px;top:102.2px;width:452.8px;height:442.8px;background:#fff;border:1px solid #d3d5d7"></div>
<div class="a" style="left:228.2px;top:92.4px;width:26.2px;height:10.2px;background:#e9e9e9;border:1px solid #d0d0d0;border-bottom:none"></div>
<div class="a" style="left:282.6px;top:92.3px;width:20.7px;height:10.3px;background:#e9e9e9;border:1px solid #d0d0d0;border-bottom:none"></div>
<div class="a" style="left:303.3px;top:92.3px;width:25.2px;height:10.3px;background:#e9e9e9;border:1px solid #d0d0d0;border-bottom:none"></div>
<div class="a" style="left:254.4px;top:91.2px;width:28.2px;height:12.3px;background:#fff;border:1px solid #d0d0d0;border-bottom:none"></div>
<div class="t" style="left:231.8px;top:95px;font-size:6.6px;color:#2a2a2a;transform:scaleX(0.84);transform-origin:0 0;">General</div>
<div class="t" style="left:258px;top:94px;font-size:6.6px;color:#2a2a2a;transform:scaleX(0.88);transform-origin:0 0;">Options</div>
<div class="t" style="left:284.9px;top:95px;font-size:6.6px;color:#2a2a2a;transform:scaleX(0.88);transform-origin:0 0;">Filters</div>
<div class="t" style="left:306.5px;top:95px;font-size:6.6px;color:#2a2a2a;transform:scaleX(0.88);transform-origin:0 0;">Actions</div>
<div class="t" style="left:238.9px;top:117px;font-size:6.6px;color:#2a2a2a;transform:scaleX(0.9);transform-origin:0 0;">Level</div>
<div class="a" style="left:238.4px;top:125.3px;width:99.5px;height:14.8px;background:#fff;border:1px solid #cfcfcf;border-radius:1px"></div>
<div class="t" style="left:241px;top:130px;font-size:6.6px;color:#2a2a2a;transform:scaleX(0.87);transform-origin:0 0;">Success Audit</div>
<svg class="a" style="left:327.8px;top:129.8px" width="7" height="5" viewBox="0 0 7 5" ><path d="M0.8 1l2.7 2.7 2.7-2.7" stroke="#222" stroke-width="1.1" fill="none"/></svg>
<svg class="a" style="left:653.2px;top:121.2px" width="8" height="8" viewBox="0 0 8 8" ><circle cx="4" cy="4" r="3.9" fill="#1e78d6"/><path d="M2.7 3a1.3 1.3 0 1 1 1.9 1.1c-0.5 0.3-0.6 0.5-0.6 1" stroke="#fff" stroke-width="0.8" fill="none"/><rect x="3.6" y="5.7" width="0.8" height="0.8" fill="#fff"/></svg>
<div class="t" style="left:238.8px;top:155px;font-size:6.6px;color:#1e1e1e;font-weight:bold;">Event IDs</div>
<div class="t" style="left:292.4px;top:155px;font-size:6.6px;color:#1e1e1e;font-weight:bold;">Logon Types</div>
<div class="cb" style="left:238.2px;top:168.2px;width:7.1px;height:6.6px"></div><svg class="a" style="left:238.2px;top:168.2px" width="7" height="7" viewBox="0 0 7 7" ><path d="M1 3.4l1.6 2 3.6-4.6" stroke="#1a1a1a" stroke-width="1.15" fill="none"/></svg><div class="t" style="left:248.1px;top:169px;font-size:6.6px;color:#2a2a2a;transform:scaleX(0.86);transform-origin:0 0;">4624</div>
<div class="cb" style="left:238.2px;top:179.8px;width:7.1px;height:6.6px"></div><div class="t" style="left:248.1px;top:181px;font-size:6.6px;color:#2a2a2a;transform:scaleX(0.86);transform-origin:0 0;">4634</div>
<div class="cb" style="left:238.2px;top:191.4px;width:7.1px;height:6.6px"></div><div class="t" style="left:248.1px;top:192px;font-size:6.6px;color:#2a2a2a;transform:scaleX(0.86);transform-origin:0 0;">4647</div>
<div class="cb" style="left:238.2px;top:203.0px;width:7.1px;height:6.6px"></div><div class="t" style="left:248.1px;top:204px;font-size:6.6px;color:#2a2a2a;transform:scaleX(0.86);transform-origin:0 0;">4768</div>
<div class="cb" style="left:292.3px;top:168.2px;width:7.1px;height:6.6px"></div><svg class="a" style="left:292.3px;top:168.2px" width="7" height="7" viewBox="0 0 7 7" ><path d="M1 3.4l1.6 2 3.6-4.6" stroke="#1a1a1a" stroke-width="1.15" fill="none"/></svg><div class="t" style="left:302.2px;top:169px;font-size:6.6px;color:#2a2a2a;transform:scaleX(0.86);transform-origin:0 0;">Interactive</div>
<div class="cb" style="left:292.3px;top:179.8px;width:7.1px;height:6.6px"></div><svg class="a" style="left:292.3px;top:179.8px" width="7" height="7" viewBox="0 0 7 7" ><path d="M1 3.4l1.6 2 3.6-4.6" stroke="#1a1a1a" stroke-width="1.15" fill="none"/></svg><div class="t" style="left:302.2px;top:181px;font-size:6.6px;color:#2a2a2a;transform:scaleX(0.86);transform-origin:0 0;">Network</div>
<div class="cb" style="left:292.3px;top:191.4px;width:7.1px;height:6.6px"></div><div class="t" style="left:302.2px;top:192px;font-size:6.6px;color:#2a2a2a;transform:scaleX(0.86);transform-origin:0 0;">Batch</div>
<div class="cb" style="left:292.3px;top:203.0px;width:7.1px;height:6.6px"></div><div class="t" style="left:302.2px;top:204px;font-size:6.6px;color:#2a2a2a;transform:scaleX(0.86);transform-origin:0 0;">Service</div>
<div class="cb" style="left:292.3px;top:214.6px;width:7.1px;height:6.6px"></div><div class="t" style="left:302.2px;top:215px;font-size:6.6px;color:#2a2a2a;transform:scaleX(0.86);transform-origin:0 0;">Unlock</div>
<div class="cb" style="left:349.3px;top:168.2px;width:7.1px;height:6.6px"></div><div class="t" style="left:359.2px;top:169px;font-size:6.6px;color:#2a2a2a;transform:scaleX(0.86);transform-origin:0 0;">Network Clear Text</div>
<div class="cb" style="left:349.3px;top:179.8px;width:7.1px;height:6.6px"></div><div class="t" style="left:359.2px;top:181px;font-size:6.6px;color:#2a2a2a;transform:scaleX(0.86);transform-origin:0 0;">New Credentials</div>
<div class="cb" style="left:349.3px;top:191.4px;width:7.1px;height:6.6px"></div><svg class="a" style="left:349.3px;top:191.4px" width="7" height="7" viewBox="0 0 7 7" ><path d="M1 3.4l1.6 2 3.6-4.6" stroke="#1a1a1a" stroke-width="1.15" fill="none"/></svg><div class="t" style="left:359.2px;top:192px;font-size:6.6px;color:#2a2a2a;transform:scaleX(0.86);transform-origin:0 0;">Remote Interactive</div>
<div class="cb" style="left:349.3px;top:203.0px;width:7.1px;height:6.6px"></div><div class="t" style="left:359.2px;top:204px;font-size:6.6px;color:#2a2a2a;transform:scaleX(0.86);transform-origin:0 0;">Cached Interactive</div>
<div class="a" style="left:683.4px;top:91px;width:99.3px;height:453.6px;background:#f8f8f8;border:1px solid #dcdee0"></div>
<div class="a" style="left:684.4px;top:92px;width:97.3px;height:9.6px;background:#eef0f1"></div>
<div class="t" style="left:686.8px;top:95px;font-size:6.6px;color:#3a3a3a;transform:scaleX(0.87);transform-origin:0 0;">Assignments</div>
<div class="a" style="left:723.7px;top:95.5px;width:35px;height:3.4px;background:repeating-conic-gradient(#cdd0d3 0 25%,#eef0f1 0 50%) 0 0/2px 2px"></div>
<svg class="a" style="left:763px;top:95.8px" width="5" height="4" viewBox="0 0 5 4" ><path d="M0.6 0.8l1.9 1.9 1.9-1.9" stroke="#8a8a8a" stroke-width="0.7" fill="none"/></svg>
<svg class="a" style="left:774.2px;top:94px" width="4" height="7" viewBox="0 0 4 7" ><rect x="0.8" y="0.3" width="2.4" height="3.6" fill="#9a9a9a"/><path d="M0 4h4M2 4v3" stroke="#9a9a9a" stroke-width="0.7"/></svg>
<svg class="a" style="left:685px;top:110px" width="10" height="12" viewBox="0 0 10 12" ><rect x="0" y="0" width="9" height="3.2" fill="#1e8fe0"/><rect x="0" y="4" width="9" height="3.2" fill="#1e8fe0"/><rect x="0" y="8" width="9" height="3.2" fill="#1e8fe0"/><path d="M1 1.6h2M1 5.6h2M1 9.6h2" stroke="#d6ecfa" stroke-width="0.7" stroke-dasharray="0.7 0.5"/></svg><div class="t" style="left:698.3px;top:114px;font-size:6.6px;color:#1e1e1e;font-weight:bold;">Hosts</div><div class="a" style="left:683.6px;top:127.7px;width:82px;height:13px;background:#fff;border:1px solid #dcdcdc"></div><div class="t" style="left:688px;top:132px;font-size:6.6px;color:#5a5a5a;transform:scaleX(0.87);transform-origin:0 0;">Select from list</div><svg class="a" style="left:755px;top:132.3px" width="7" height="5" viewBox="0 0 7 5" ><path d="M0.6 0.8l2.8 2.8 2.8-2.8" stroke="#333" stroke-width="1.1" fill="none"/></svg><div class="btn" style="left:767.3px;top:127.7px;width:14.2px;height:13.5px"></div><svg class="a" style="left:770.8px;top:130.9px" width="8" height="8" viewBox="0 0 8 8" ><path d="M3.9 0.3v7.2M0.3 3.9h7.2" stroke="#333" stroke-width="1"/></svg><div class="a" style="left:684.4px;top:145px;width:97.3px;height:1px;background:#d8dadc"></div>
<svg class="a" style="left:684.6px;top:161.3px" width="10" height="8" viewBox="0 0 10 8" ><path d="M0 0.7a0.7 0.7 0 0 1 0.7-0.7h3l1.2 1.2h4.4a0.7 0.7 0 0 1 0.7 0.7v5.7h-10z" fill="#5a5a5a"/></svg><div class="t" style="left:698.3px;top:163px;font-size:6.6px;color:#1e1e1e;font-weight:bold;">Host Groups</div><div class="a" style="left:683.6px;top:176px;width:82px;height:13px;background:#fff;border:1px solid #dcdcdc"></div><div class="t" style="left:688px;top:180px;font-size:6.6px;color:#5a5a5a;transform:scaleX(0.87);transform-origin:0 0;">Select from list</div><svg class="a" style="left:755px;top:180.6px" width="7" height="5" viewBox="0 0 7 5" ><path d="M0.6 0.8l2.8 2.8 2.8-2.8" stroke="#333" stroke-width="1.1" fill="none"/></svg><div class="btn" style="left:767.3px;top:176px;width:14.2px;height:13.5px"></div><svg class="a" style="left:770.8px;top:179.2px" width="8" height="8" viewBox="0 0 8 8" ><path d="M3.9 0.3v7.2M0.3 3.9h7.2" stroke="#333" stroke-width="1"/></svg><div class="a" style="left:684.4px;top:193.3px;width:97.3px;height:1px;background:#d8dadc"></div>
<svg class="a" style="left:684.6px;top:209.8px" width="10" height="8" viewBox="0 0 10 8" ><path d="M0 0.7a0.7 0.7 0 0 1 0.7-0.7h3l1.2 1.2h4.4a0.7 0.7 0 0 1 0.7 0.7v5.7h-10z" fill="#5a5a5a"/></svg><div class="t" style="left:698.3px;top:211px;font-size:6.6px;color:#1e1e1e;font-weight:bold;">Template Groups</div><div class="a" style="left:683.6px;top:224.8px;width:82px;height:13px;background:#fff;border:1px solid #dcdcdc"></div><div class="t" style="left:688px;top:229px;font-size:6.6px;color:#5a5a5a;transform:scaleX(0.87);transform-origin:0 0;">Select from list</div><svg class="a" style="left:755px;top:229.4px" width="7" height="5" viewBox="0 0 7 5" ><path d="M0.6 0.8l2.8 2.8 2.8-2.8" stroke="#333" stroke-width="1.1" fill="none"/></svg><div class="btn" style="left:767.3px;top:224.8px;width:14.2px;height:13.5px"></div><svg class="a" style="left:770.8px;top:228.0px" width="8" height="8" viewBox="0 0 8 8" ><path d="M3.9 0.3v7.2M0.3 3.9h7.2" stroke="#333" stroke-width="1"/></svg>
<div class="a" style="left:683.6px;top:240.4px;width:82px;height:30px;background:#fff;border:1px solid #cfcfcf"></div>
<div class="t" style="left:688px;top:245px;font-size:6.6px;color:#2a2a2a;transform:scaleX(0.87);transform-origin:0 0;">Success Logons</div>
<div class="a" style="left:769.6px;top:243.4px;width:9.5px;height:9px;border:1px solid #c4c4c4;background:#f4f4f4"></div>
<div class="a" style="left:771.6px;top:247px;width:5.5px;height:0.8px;background:#a0a0a0"></div>
<div class="btn" style="left:767.2px;top:256.7px;width:14.2px;height:13.9px"></div>
<svg class="a" style="left:769px;top:258px" width="11" height="11" viewBox="0 0 11 11" ><rect x="0.2" y="0.2" width="6.2" height="5.6" rx="1" fill="#5a5a5a"/><rect x="1.9" y="2" width="6.2" height="5.6" rx="1" fill="#5a5a5a" stroke="#d8d8d8" stroke-width="0.45"/><rect x="3.6" y="3.8" width="6.6" height="6.4" rx="1.6" fill="#5a5a5a" stroke="#d8d8d8" stroke-width="0.45"/><rect x="5.1" y="5.9" width="3.6" height="2.2" fill="#e8e8e8"/></svg>
<div class="dbtn" style="left:233.5px;top:555.3px;width:39.8px;height:12.4px"></div>
<div class="t" style="left:247.3px;top:559px;font-size:6.6px;color:#f4f6f7;transform:scaleX(0.86);transform-origin:0 0;-webkit-text-stroke:0.15px #f4f6f7;">Save</div>
<div class="dbtn" style="left:277.5px;top:555.3px;width:40px;height:12.4px"></div>
<div class="t" style="left:288.8px;top:559px;font-size:6.6px;color:#f4f6f7;transform:scaleX(0.86);transform-origin:0 0;-webkit-text-stroke:0.15px #f4f6f7;">Export</div>
<div class="dbtn" style="left:321.5px;top:555.3px;width:44.2px;height:12.4px"></div>
<div class="t" style="left:323.6px;top:559px;font-size:6.6px;color:#f4f6f7;transform:scaleX(0.86);transform-origin:0 0;-webkit-text-stroke:0.15px #f4f6f7;">View Summary</div>
<div class="dbtn" style="left:693.2px;top:555.3px;width:39.7px;height:12.4px"></div>
<div class="t" style="left:705px;top:559px;font-size:6.6px;color:#f4f6f7;transform:scaleX(0.86);transform-origin:0 0;-webkit-text-stroke:0.15px #f4f6f7;">Delete</div>
<div class="dbtn" style="left:737px;top:555.3px;width:40px;height:12.4px"></div>
<div class="t" style="left:749.8px;top:559px;font-size:6.6px;color:#f4f6f7;transform:scaleX(0.86);transform-origin:0 0;-webkit-text-stroke:0.15px #f4f6f7;">Close</div>
<div class="a" style="left:0;top:0;width:793px;height:597px;border:1px solid #9a9a9a;pointer-events:none"></div>
</body></html>
